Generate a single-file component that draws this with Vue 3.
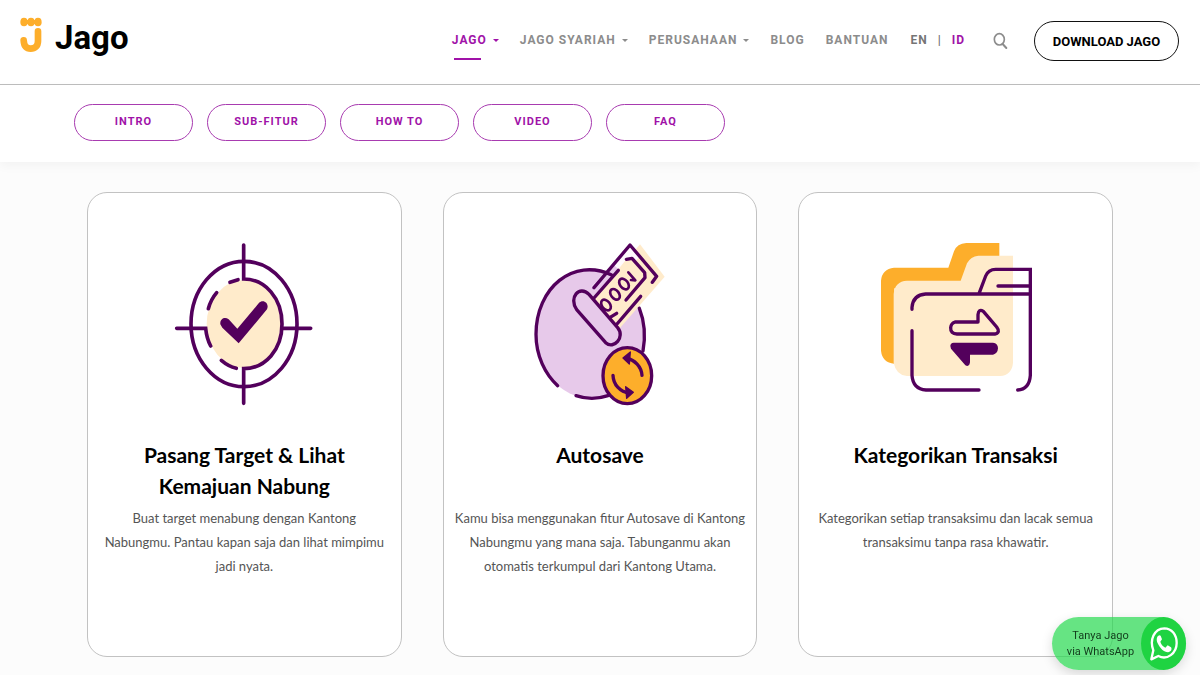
<script setup>
const menu = [
  { label: 'JAGO', caret: true, active: true },
  { label: 'JAGO SYARIAH', caret: true },
  { label: 'PERUSAHAAN', caret: true },
  { label: 'BLOG' },
  { label: 'BANTUAN' },
]
const sections = ['INTRO', 'SUB-FITUR', 'HOW TO', 'VIDEO', 'FAQ']
const cards = [
  {
    icon: 'target',
    title: 'Pasang Target & Lihat Kemajuan Nabung',
    text: 'Buat target menabung dengan Kantong Nabungmu. Pantau kapan saja dan lihat mimpimu jadi nyata.',
  },
  {
    icon: 'autosave',
    title: 'Autosave',
    text: 'Kamu bisa menggunakan fitur Autosave di Kantong Nabungmu yang mana saja. Tabunganmu akan otomatis terkumpul dari Kantong Utama.',
  },
  {
    icon: 'folder',
    title: 'Kategorikan Transaksi',
    text: 'Kategorikan setiap transaksimu dan lacak semua transaksimu tanpa rasa khawatir.',
  },
]
</script>

<template>
  <div class="page">
    <header class="header">
      <a class="logo" href="#" aria-label="Jago">
        <svg class="logo-mark" viewBox="0 0 66 108" aria-hidden="true">
          <g fill="#fdae2b">
            <ellipse cx="12" cy="15" rx="11" ry="13" />
            <ellipse cx="33" cy="15" rx="11" ry="13" />
            <ellipse cx="54" cy="15" rx="11" ry="13" />
            <rect x="12" y="9" width="42" height="12" />
          </g>
          <path d="M54 43V72C54 87 45 95 32 95C20 95 12 87 11 70" fill="none" stroke="#fdae2b" stroke-width="20" stroke-linecap="round" />
        </svg>
        <span class="logo-name">Jago</span>
      </a>
      <nav class="menu" aria-label="Menu utama">
        <a v-for="m in menu" :key="m.label" href="#" :class="['menu-link', { active: m.active }]">
          <span class="menu-text">{{ m.label }}</span>
          <span v-if="m.caret" class="caret"></span>
        </a>
      </nav>
      <div class="languages">
        <a href="#">EN</a><span>|</span><a href="#" class="current">ID</a>
      </div>
      <button class="search" type="button" aria-label="Cari">
        <svg viewBox="0 0 45 54" aria-hidden="true">
          <ellipse cx="19" cy="22" rx="15" ry="17" fill="none" stroke="#8c8c8c" stroke-width="5" />
          <path d="M29 36L40 48" stroke="#8c8c8c" stroke-width="6" stroke-linecap="round" />
        </svg>
      </button>
      <button class="download" type="button">DOWNLOAD JAGO</button>
    </header>

    <nav class="sections" aria-label="Bagian halaman">
      <a v-for="s in sections" :key="s" href="#">{{ s }}</a>
    </nav>

    <main class="cards">
      <article v-for="c in cards" :key="c.icon" class="card">
        <svg v-if="c.icon === 'target'" class="art" viewBox="0 0 480 540" aria-hidden="true">
          <ellipse cx="240" cy="267" rx="112" ry="132" fill="#ffebcb" />
          <g fill="none" stroke="#53005c" stroke-width="11" stroke-linecap="round">
            <ellipse cx="240" cy="267" rx="159" ry="188" />
            <path d="M239 30V132C304 132 354 190 354 267C354 344 304 401 239 401V505" />
            <path d="M38 280H125C127 300 132 318 140 333M354 280H440" />
            <path d="M198 142L222 134M133 221C138 203 146 187 158 173M172 376C186 388 201 396 217 400" />
          </g>
          <path d="M169 268C167 252 182 244 194 253L220 281L284 205C298 190 317 206 309 223L224 325L175 278Z" fill="#53005c" />
        </svg>

        <svg v-else-if="c.icon === 'autosave'" class="art" viewBox="0 0 480 540" aria-hidden="true">
          <ellipse cx="211" cy="297" rx="164" ry="192" fill="#e7c9ea" />
          <path d="M221 194L360 28L434 125L298 281Z" fill="#ffebcb" />
          <path d="M214 155L330 30L360 64L245 188Z" fill="#fffafd" />
          <path d="M214 155L279 88L304 110L245 190Z" fill="#e7c9ea" />
          <path d="M222 194L319 73L336 70L374 113L375 128L291 267Z" fill="#ffebcb" />
          <g fill="none" stroke="#53005c" stroke-width="10" stroke-linecap="round" stroke-linejoin="round">
            <path d="M275 120C160 66 48 158 48 298C48 362 75 417 113 452M168 482C200 493 231 493 264 482M358 220C374 260 377 303 369 348" />
            <path d="M222 158L330 30L410 124L397 142" />
            <path d="M295 106L222 189M362 184L291 267" />
            <path d="M319 73L336 70L374 113L375 128L318 195M269 248L290 235" />
            <path d="M325 112L346 136L333 135" stroke-width="8" />
            <g stroke-width="8">
              <ellipse cx="312" cy="147" rx="12" ry="18" transform="rotate(-38 312 147)" />
              <ellipse cx="285" cy="178" rx="12" ry="18" transform="rotate(-38 285 178)" />
              <ellipse cx="258" cy="210" rx="12" ry="18" transform="rotate(-38 258 210)" />
            </g>
            <path d="M207 178L293 278C316 306 282 345 257 323L170 224C145 188 178 149 207 178Z" fill="#e7c9ea" />
            <ellipse cx="322" cy="422" rx="73" ry="84" fill="#fdae2b" />
            <path d="M366 421C364 395 345 375 318 369M279 421C280 448 299 471 329 474" />
          </g>
          <path d="M309 369L331 351L328 387ZM340 472L317 455L320 490Z" fill="#53005c" stroke="#53005c" stroke-width="4" stroke-linejoin="round" />
        </svg>

        <svg v-else class="art folder" viewBox="0 0 510 540" aria-hidden="true">
          <path d="M30 137Q33 102 69 98H232L249 49Q258 25 286 24H385V160H70V386Q34 383 30 347Z" fill="#fdae2b" />
          <path d="M68 177Q71 139 108 137H269L288 85Q299 64 322 62H426V383Q423 420 387 423H108Q75 420 68 383Z" fill="#ffebcb" />
          <g fill="none" stroke="#53005c" stroke-width="10" stroke-linecap="round">
            <path d="M123 223V217Q126 180 164 177H478M123 287V421Q126 462 165 465H324M440 465Q475 463 478 421V103H374Q352 103 344 123L324 176M381 153H474" />
            <path d="M252 261H321V239Q323 220 337 229L377 276Q389 292 373 297H258Q238 296 239 278Q240 265 252 261Z" stroke-linejoin="round" />
          </g>
          <path d="M238 333Q238 324 248 323H366Q381 325 381 340Q380 356 366 359H297V382Q295 397 283 391L240 341Z" fill="#53005c" />
        </svg>

        <h2>{{ c.title }}</h2>
        <p>{{ c.text }}</p>
      </article>
    </main>

    <a class="whatsapp" href="#">
      <span class="wa-text">Tanya Jago<br />via WhatsApp</span>
      <span class="wa-icon">
        <svg viewBox="0 0 84 102" aria-hidden="true">
          <path d="M4 97L10 70C-2 39 12 5 43 4C65 4 80 23 80 48C80 79 51 101 25 87Z" fill="none" stroke="#fff" stroke-width="7" stroke-linejoin="round" />
          <path d="M28 25C20 27 18 39 23 49C30 64 42 76 54 76C63 75 67 67 63 61L53 55L46 62C38 58 33 51 31 44L36 37L32 26Z" fill="#fff" />
        </svg>
      </span>
    </a>
  </div>
</template>

<style>
body {
  margin: 0;
  background: #fcfcfc;
}
</style>

<style scoped>
.page {
  font-family: Roboto, "Liberation Sans", sans-serif;
  color: #000;
}
a {
  color: inherit;
  text-decoration: none;
}
button {
  font-family: inherit;
  cursor: pointer;
}
.header {
  display: flex;
  align-items: center;
  box-sizing: border-box;
  min-height: 85px;
  padding: 0 21px 2px 20px;
  background: #fff;
  border-bottom: 1px solid #bdbdbd;
}
.logo {
  display: flex;
  align-items: center;
  gap: 13px;
  margin-right: auto;
}
.logo-mark {
  width: 22px;
  height: 36px;
  padding-bottom: 12px;
}
.logo-name {
  padding-bottom: 6px;
  font-size: 33px;
  line-height: 40px;
  font-weight: 700;
}
.menu {
  display: flex;
  gap: 21px;
  padding-bottom: 2px;
}
.menu-link {
  position: relative;
  display: flex;
  align-items: center;
  gap: 6px;
  color: #8c8c8c;
  font-size: 12px;
  line-height: 20px;
  font-weight: 700;
  letter-spacing: 1px;
}
.menu-link.active {
  color: #a012a8;
}
.menu-link.active::after {
  content: "";
  position: absolute;
  left: 2px;
  top: 28px;
  width: 27px;
  height: 2px;
  background: #a012a8;
}
.caret {
  border: 3px solid transparent;
  border-top-color: currentColor;
  border-bottom: 0;
}
.languages {
  display: flex;
  gap: 10px;
  margin-left: 22px;
  padding-bottom: 2px;
  color: #757575;
  font-size: 12px;
  line-height: 20px;
  font-weight: 700;
  letter-spacing: 1px;
}
.languages .current {
  color: #a012a8;
}
.search {
  display: flex;
  margin: 0 26px 0 28px;
  padding: 0;
  border: 0;
  background: none;
}
.search svg {
  width: 15px;
  height: 18px;
}
.download {
  min-width: 145px;
  height: 40px;
  padding: 0 16px;
  border: 1px solid #111;
  border-radius: 20px;
  background: #fff;
  color: #000;
  font-size: 13px;
  font-weight: 700;
}
.sections {
  display: flex;
  gap: 14px;
  padding: 19px 74px 21px;
  background: #fff;
  box-shadow: 0 4px 10px rgba(0, 0, 0, 0.04);
}
.sections a {
  box-sizing: border-box;
  width: 119px;
  padding-bottom: 2px;
  border: 1px solid #a83bb0;
  border-radius: 19px;
  color: #a012a8;
  font-size: 11px;
  line-height: 33px;
  font-weight: 700;
  letter-spacing: 1px;
  text-align: center;
}
.cards {
  display: grid;
  grid-template-columns: repeat(3, 1fr);
  gap: 41px;
  padding: 30px 87px 18px;
}
.card {
  display: flex;
  flex-direction: column;
  align-items: center;
  box-sizing: border-box;
  padding: 42px 8px 78px;
  border: 1px solid #c2c2c2;
  border-radius: 20px;
  background: #fff;
  text-align: center;
}
.art {
  width: 160px;
  height: 180px;
}
.folder {
  width: 170px;
}
h2 {
  max-width: 240px;
  min-height: 62px;
  margin: 24px 0 5px;
  font-family: Lato, Roboto, sans-serif;
  font-size: 21px;
  line-height: 31px;
  font-weight: 700;
}
p {
  max-width: 292px;
  margin: 0;
  color: #555;
  font-family: Lato, Roboto, sans-serif;
  font-size: 13px;
  line-height: 24px;
}
.whatsapp {
  position: fixed;
  right: 14px;
  bottom: 5px;
  display: flex;
  align-items: center;
  justify-content: space-between;
  width: 134px;
  height: 53px;
  border-radius: 27px;
  background: rgba(37, 217, 78, 0.7);
  box-shadow: 0 4px 12px rgba(0, 0, 0, 0.15);
}
.wa-text {
  flex: 1;
  padding-left: 8px;
  color: #123c1c;
  font-size: 11px;
  line-height: 16px;
  text-align: center;
}
.wa-icon {
  display: flex;
  align-items: center;
  justify-content: center;
  width: 45px;
  height: 53px;
  border-radius: 50%;
  background: #1fd342;
}
.wa-icon svg {
  width: 28px;
  height: 34px;
}
</style>
